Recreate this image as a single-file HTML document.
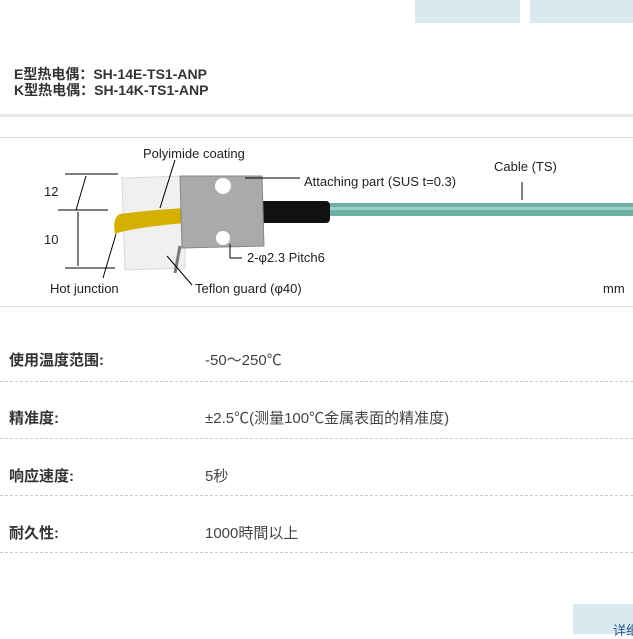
<!DOCTYPE html>
<html><head><meta charset="utf-8"><style>
body{margin:0;width:633px;height:634px;overflow:hidden;background:#fff;font-family:"Liberation Sans","Noto Sans CJK SC",sans-serif;position:relative}
.a{position:absolute}
.box{background:#dae9f0}
.t{font-size:14px;font-weight:bold;color:#333;left:14px;line-height:16px}
.row{position:absolute;left:0;width:633px;border-bottom:1px dashed #ccc}
.k{position:absolute;left:9px;font-size:15px;font-weight:bold;color:#333}
.v{position:absolute;left:205px;font-size:15px;color:#444}
</style></head><body>
<div class="a box" style="left:415px;top:0;width:105px;height:23px"></div>
<div class="a box" style="left:530px;top:0;width:103px;height:23px"></div>
<div class="a t" style="top:66px">E型热电偶：SH-14E-TS1-ANP</div>
<div class="a t" style="top:82px">K型热电偶：SH-14K-TS1-ANP</div>
<div class="a" style="left:0;top:114px;width:633px;height:3px;background:#e8e8e8"></div>
<div class="a" style="left:0;top:137px;width:633px;height:1px;background:#ddd"></div>
<div class="a" style="left:0;top:306px;width:633px;height:1px;background:#ddd"></div>
<svg class="a" style="left:0;top:138px" width="633" height="168" font-family="Liberation Sans,sans-serif" font-size="13" fill="#222">
<line x1="65" y1="36" x2="118" y2="36" stroke="#000"/>
<line x1="58" y1="72" x2="108" y2="72" stroke="#000"/>
<line x1="65" y1="130" x2="115" y2="130" stroke="#000"/>
<line x1="76" y1="72" x2="86" y2="38" stroke="#000"/>
<line x1="78" y1="74" x2="78" y2="128" stroke="#000"/>
<text x="44" y="58">12</text><text x="44" y="106">10</text>
<rect x="330" y="65" width="303" height="13" fill="#6fb0a6"/>
<rect x="330" y="69" width="303" height="3" fill="#9cd0c6"/>
<rect x="255" y="63" width="75" height="22" rx="4" fill="#111"/>
<path d="M122 40 L185 38 L185 130 L125 132 Z" fill="#f0f0f0" stroke="#d8d8d8"/>
<path d="M120 76 Q112 80 115 96 Q130 90 185 85 L185 70 Q150 72 120 76Z" fill="#d4b000"/>
<path d="M180 38 L262 38 L264 108 L182 110 Z" fill="#aaa" stroke="#888"/>
<circle cx="223" cy="48" r="8" fill="#fff"/><circle cx="223" cy="100" r="7" fill="#fff"/>
<line x1="180" y1="108" x2="175" y2="135" stroke="#777" stroke-width="3"/>
<line x1="175" y1="22" x2="160" y2="70" stroke="#000"/>
<line x1="245" y1="40" x2="300" y2="40" stroke="#000"/>
<line x1="522" y1="44" x2="522" y2="62" stroke="#000"/>
<line x1="230" y1="106" x2="230" y2="120" stroke="#000"/><line x1="230" y1="120" x2="242" y2="120" stroke="#000"/>
<line x1="116" y1="96" x2="103" y2="140" stroke="#000"/>
<line x1="167" y1="118" x2="192" y2="147" stroke="#000"/>
<text x="143" y="20">Polyimide coating</text>
<text x="304" y="48">Attaching part (SUS t=0.3)</text>
<text x="494" y="33">Cable (TS)</text>
<text x="247" y="124">2-φ2.3 Pitch6</text>
<text x="50" y="155">Hot junction</text>
<text x="195" y="155">Teflon guard (φ40)</text>
<text x="603" y="155">mm</text>
</svg>
<div class="row" style="top:340px;height:41px"><span class="k" style="top:9px">使用温度范围:</span><span class="v" style="top:9px">-50～250℃</span></div>
<div class="row" style="top:398px;height:40px"><span class="k" style="top:9px">精准度:</span><span class="v" style="top:9px">±2.5℃(测量100℃金属表面的精准度)</span></div>
<div class="row" style="top:456px;height:39px"><span class="k" style="top:9px">响应速度:</span><span class="v" style="top:9px">5秒</span></div>
<div class="row" style="top:513px;height:39px"><span class="k" style="top:9px">耐久性:</span><span class="v" style="top:9px">1000時間以上</span></div>
<div class="a box" style="left:573px;top:604px;width:60px;height:30px"></div>
<div class="a" style="left:613px;top:620px;font-size:13px;color:#2a5a8a;white-space:nowrap">详细</div>
</body></html>
